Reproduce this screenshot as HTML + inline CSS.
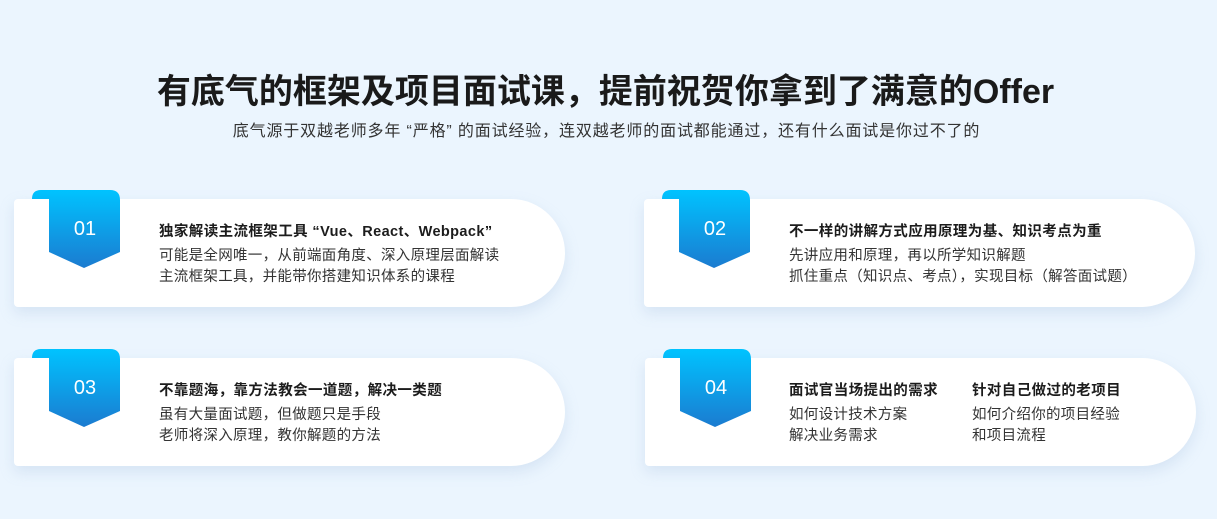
<!DOCTYPE html>
<html><head><meta charset="utf-8"><style>
body{margin:0;width:1217px;height:519px;background:#ebf5fe;font-family:"Liberation Sans","Noto Sans CJK SC",sans-serif;position:relative;overflow:hidden;color:#1c1c1c}
.h1{position:absolute;top:64px;left:0;width:1211px;text-align:center;font-size:34px;font-weight:bold;color:#1a1a1a}
.sub{position:absolute;top:117px;left:0;width:1213px;text-align:center;font-size:16px;color:#333;letter-spacing:0.85px}
.card{position:absolute;width:551px;height:108px;background:#fff;border-radius:4px 54px 54px 4px;box-shadow:0 6px 14px rgba(150,180,215,.25)}
.badge{position:absolute;width:90px;height:80px}
.num{position:absolute;width:72px;text-align:center;color:#fff;font-size:20px;top:28px;left:17px;font-family:"Liberation Sans",sans-serif}
.t{position:absolute;font-size:14.5px;font-weight:bold;color:#1c1c1c;white-space:nowrap;letter-spacing:0.4px}
.p{position:absolute;font-size:14.5px;line-height:21px;color:#333;white-space:nowrap;letter-spacing:0.3px}
</style></head><body>
<div class="h1">有底气的框架及项目面试课，提前祝贺你拿到了满意的Offer</div>
<div class="sub">底气源于双越老师多年 “严格” 的面试经验，连双越老师的面试都能通过，还有什么面试是你过不了的</div>

<svg width="0" height="0" style="position:absolute"><defs><linearGradient id="g" x1="0" y1="0" x2="0" y2="1"><stop offset="0" stop-color="#00c3ff"/><stop offset="1" stop-color="#1b7bd0"/></linearGradient></defs></svg>

<div class="card" style="left:14px;top:199px"></div>
<div class="card" style="left:644px;top:199px"></div>
<div class="card" style="left:14px;top:358px"></div>
<div class="card" style="left:645px;top:358px"></div>

<div class="badge" style="left:32px;top:190px"><svg width="90" height="80"><path d="M0 9 Q0 0 9 0 L78 0 Q88 0 88 10 L88 62 L52 78 L17 62 L17 9 Z" fill="url(#g)"/></svg><div class="num">01</div></div>
<div class="badge" style="left:662px;top:190px"><svg width="90" height="80"><path d="M0 9 Q0 0 9 0 L78 0 Q88 0 88 10 L88 62 L52 78 L17 62 L17 9 Z" fill="url(#g)"/></svg><div class="num">02</div></div>
<div class="badge" style="left:32px;top:349px"><svg width="90" height="80"><path d="M0 9 Q0 0 9 0 L78 0 Q88 0 88 10 L88 62 L52 78 L17 62 L17 9 Z" fill="url(#g)"/></svg><div class="num">03</div></div>
<div class="badge" style="left:663px;top:349px"><svg width="90" height="80"><path d="M0 9 Q0 0 9 0 L78 0 Q88 0 88 10 L88 62 L52 78 L17 62 L17 9 Z" fill="url(#g)"/></svg><div class="num">04</div></div>

<div class="t" style="left:159px;top:220px">独家解读主流框架工具 “Vue、React、Webpack”</div>
<div class="p" style="left:159px;top:246px">可能是全网唯一，从前端面角度、深入原理层面解读<br>主流框架工具，并能带你搭建知识体系的课程</div>

<div class="t" style="left:789px;top:220px">不一样的讲解方式应用原理为基、知识考点为重</div>
<div class="p" style="left:789px;top:246px">先讲应用和原理，再以所学知识解题<br>抓住重点（知识点、考点），实现目标（解答面试题）</div>

<div class="t" style="left:159px;top:379px">不靠题海，靠方法教会一道题，解决一类题</div>
<div class="p" style="left:159px;top:405px">虽有大量面试题，但做题只是手段<br>老师将深入原理，教你解题的方法</div>

<div class="t" style="left:789px;top:379px">面试官当场提出的需求</div>
<div class="p" style="left:789px;top:405px">如何设计技术方案<br>解决业务需求</div>
<div class="t" style="left:972px;top:379px">针对自己做过的老项目</div>
<div class="p" style="left:972px;top:405px">如何介绍你的项目经验<br>和项目流程</div>
</body></html>
